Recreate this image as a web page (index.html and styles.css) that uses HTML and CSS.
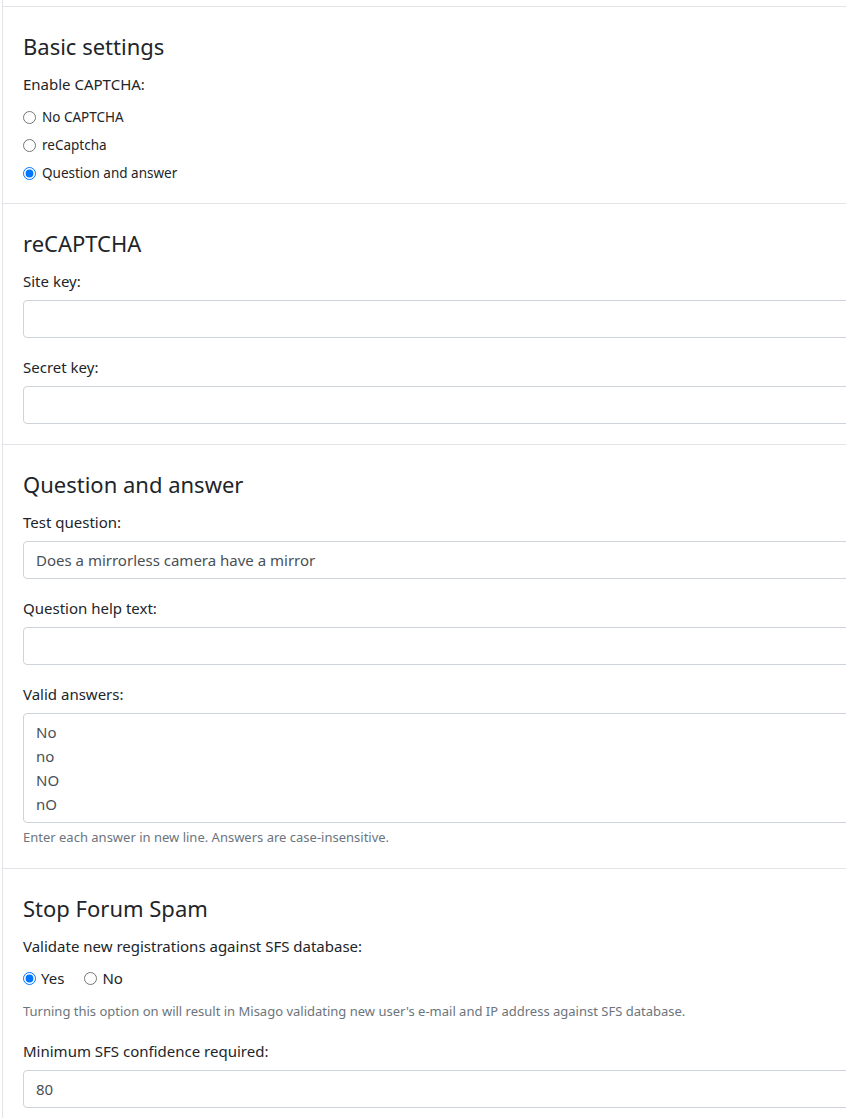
FILE: index.html
```html
<!DOCTYPE html>
<html lang="en">
<head>
  <meta charset="UTF-8">
  <meta name="viewport" content="width=device-width, initial-scale=1.0">
  <title>Misago - Captcha settings</title>
  <link rel="stylesheet" href="styles.css">
</head>
<body>
  <div class="page">
    <div class="card">
      <div class="card-top"></div>
      <form>
        <fieldset class="card-section">
          <h4>Basic settings</h4>
          <div class="form-group last">
            <label class="control-label">Enable CAPTCHA:</label>
            <div class="radio-list">
              <label class="radio"><input type="radio" name="captcha_type"> No CAPTCHA</label>
              <label class="radio"><input type="radio" name="captcha_type"> reCaptcha</label>
              <label class="radio"><input type="radio" name="captcha_type" checked> Question and answer</label>
            </div>
          </div>
        </fieldset>

        <fieldset class="card-section">
          <h4>reCAPTCHA</h4>
          <div class="form-group">
            <label class="control-label" for="site_key">Site key:</label>
            <input type="text" id="site_key" class="form-control">
          </div>
          <div class="form-group last">
            <label class="control-label" for="secret_key">Secret key:</label>
            <input type="text" id="secret_key" class="form-control">
          </div>
        </fieldset>

        <fieldset class="card-section">
          <h4>Question and answer</h4>
          <div class="form-group">
            <label class="control-label" for="qa_question">Test question:</label>
            <input type="text" id="qa_question" class="form-control" value="Does a mirrorless camera have a mirror">
          </div>
          <div class="form-group">
            <label class="control-label" for="qa_help_text">Question help text:</label>
            <input type="text" id="qa_help_text" class="form-control">
          </div>
          <div class="form-group last">
            <label class="control-label" for="qa_answers">Valid answers:</label>
            <textarea id="qa_answers" class="form-control" rows="4">No
no
NO
nO</textarea>
            <div class="form-text">Enter each answer in new line. Answers are case-insensitive.</div>
          </div>
        </fieldset>

        <fieldset class="card-section">
          <h4>Stop Forum Spam</h4>
          <div class="form-group">
            <label class="control-label">Validate new registrations against SFS database:</label>
            <div class="radio-inline">
              <label class="radio"><input type="radio" name="enable_sfs" checked> Yes</label>
              <label class="radio"><input type="radio" name="enable_sfs"> No</label>
            </div>
            <div class="form-text spaced">Turning this option on will result in Misago validating new user's e-mail and IP address against SFS database.</div>
          </div>
          <div class="form-group last">
            <label class="control-label" for="sfs_confidence">Minimum SFS confidence required:</label>
            <input type="text" id="sfs_confidence" class="form-control" value="80">
          </div>
        </fieldset>
      </form>
    </div>
  </div>
</body>
</html>
```

FILE: styles.css
```css
body {
  font-family: 'Noto Sans', 'Open Sans', sans-serif;
  font-size: 15px;
  line-height: 24px;
  color: #212529;
  background: #fff;
  margin: 0;
}
.page {
  padding-left: 2px;
  overflow: hidden;
}
.card {
  width: 1000px;
  border-left: 1px solid #e1e3e6;
}
.card-top {
  height: 6px;
}
form {
  margin: 0;
}
.card-section {
  margin: 0;
  border: none;
  border-top: 1px solid #e1e3e6;
  padding: 25px 20px 20px 20px;
  min-width: 0;
}
h4 {
  font-size: 22px;
  font-weight: 400;
  line-height: 29px;
  margin: 0 0 10px 0;
}
.form-group {
  margin-bottom: 16px;
}
.form-group.last {
  margin-bottom: 0;
}
.control-label {
  display: block;
  padding-top: 1px;
  margin-bottom: 7px;
}
.form-control {
  display: block;
  box-sizing: border-box;
  width: 100%;
  height: 38px;
  padding: 6px 12px;
  font-family: inherit;
  font-size: 15px;
  line-height: 24px;
  color: #495057;
  background: #fff;
  border: 1px solid #ced4da;
  border-radius: 4px;
  margin: 0;
}
textarea.form-control {
  height: 110px;
  resize: none;
  overflow: hidden;
}
.radio-list {
  display: flex;
  flex-direction: column;
  gap: 4px;
  padding-top: 2px;
  margin-bottom: -2px;
}
.radio {
  display: flex;
  align-items: center;
  height: 24px;
  font-size: 13.5px;
}
.radio input {
  width: 13px;
  height: 13px;
  margin: 0 6px 0 0;
}
.radio-inline {
  display: flex;
  gap: 20px;
  padding-top: 1px;
}
.radio-inline .radio {
  font-size: 15px;
}
.radio-inline .radio input {
  margin-right: 5px;
}
.form-text {
  margin-top: 4px;
  font-size: 13px;
  line-height: 21px;
  color: #6c757d;
}
.form-text.spaced {
  margin-top: 11px;
}
```
